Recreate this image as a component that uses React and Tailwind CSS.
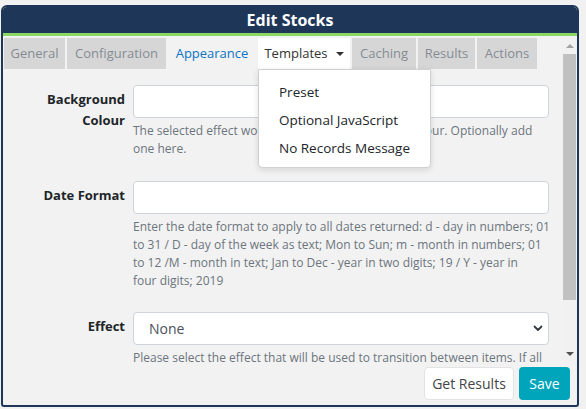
import React from "react";

const font = { fontFamily: '"Open Sans", "Noto Sans", Arial, sans-serif' };

function Tab({ w, children, variant }) {
  const base = "h-[31px] flex items-center justify-center text-[13px] shrink-0 " + w;
  if (variant === "link")
    return <div className={base + " text-[#0b72c4]"}>{children}</div>;
  if (variant === "open")
    return <div className={base + " bg-white text-[#333]"}>{children}</div>;
  return <div className={base + " bg-[#d6d6d6] text-[#858c93]"}>{children}</div>;
}

function Label({ children }) {
  return (
    <div className="w-[122px] shrink-0 text-right font-bold text-[13px] leading-[21px] pt-[4px] text-[#212529]">
      {children}
    </div>
  );
}

function Help({ lines }) {
  return (
    <div className="mt-[4px] text-[12px] leading-[18px] text-[#6c757d] whitespace-nowrap">
      {lines.map((l, i) => (
        <div key={i}>{l}</div>
      ))}
    </div>
  );
}

export default function App() {
  return (
    <div className="w-[586px] h-[409px] bg-[#f1f1f1] pt-[5px] pl-px overflow-hidden" style={font}>
      <div className="w-[578px] h-[402px] border-2 border-[#1e3658] rounded-t-[6px] rounded-b-[3px] flex flex-col bg-[#f2f2f2] overflow-hidden">
        <div className="h-[26px] bg-[#1e3658] flex items-center justify-center text-white font-bold text-[16px] shrink-0">
          Edit Stocks
        </div>
        <div className="h-[3px] bg-[#8bd763] shrink-0" />
        <div className="pt-[2px] flex h-[327px] shrink-0">
          <div className="flex-1 relative">
            <div className="flex gap-[2px] pl-px">
              <Tab w="w-[61px]">General</Tab>
              <Tab w="w-[99px]">Configuration</Tab>
              <Tab w="w-[88px]" variant="link">Appearance</Tab>
              <div className="relative">
                <Tab w="w-[92px]" variant="open">
                  <span>Templates</span>
                  <span className="ml-[8px] w-0 h-0 border-l-[4px] border-r-[4px] border-t-[4px] border-l-transparent border-r-transparent border-t-[#333]" />
                </Tab>
                <div className="absolute left-0 top-[31px] w-[173px] h-[99px] bg-white border border-[#d0d0d0] rounded-b-[4px] shadow-[0_2px_6px_rgba(0,0,0,0.12)] z-10 pt-[8px] text-[13.5px] text-[#212529]">
                  <div className="h-[28px] leading-[28px] pl-[20px]">Preset</div>
                  <div className="h-[28px] leading-[28px] pl-[20px]">Optional JavaScript</div>
                  <div className="h-[28px] leading-[28px] pl-[20px]">No Records Message</div>
                </div>
              </div>
              <Tab w="w-[64px]">Caching</Tab>
              <Tab w="w-[57px]">Results</Tab>
              <Tab w="w-[60px]">Actions</Tab>
            </div>

            <div className="flex gap-[8px] mt-[16px]">
              <Label>
                Background
                <br />
                Colour
              </Label>
              <div className="w-[416px]">
                <div className="h-[33px] bg-white border border-[#ced4da] rounded-[4px]" />
                <Help
                  lines={[
                    "The selected effect would suit a light background colour. Optionally add",
                    "one here.",
                  ]}
                />
              </div>
            </div>

            <div className="flex gap-[8px] mt-[23px]">
              <Label>Date Format</Label>
              <div className="w-[416px]">
                <div className="h-[33px] bg-white border border-[#ced4da] rounded-[4px]" />
                <Help
                  lines={[
                    "Enter the date format to apply to all dates returned: d - day in numbers; 01",
                    "to 31 / D - day of the week as text; Mon to Sun; m - month in numbers; 01",
                    "to 12 /M - month in text; Jan to Dec - year in two digits; 19 / Y - year in",
                    "four digits; 2019",
                  ]}
                />
              </div>
            </div>

            <div className="flex gap-[8px] mt-[22px]">
              <Label>Effect</Label>
              <div className="w-[416px]">
                <div className="h-[33px] bg-white border border-[#ced4da] rounded-[4px] flex items-center justify-between pl-[15px] pr-[5px]">
                  <span className="text-[14px] text-[#495057]">None</span>
                  <svg width="10" height="7" viewBox="0 0 10 7">
                    <path d="M1.5 1.5l3.5 3.5 3.5-3.5" fill="none" stroke="#343a40" strokeWidth="1.8" strokeLinecap="round" strokeLinejoin="round" />
                  </svg>
                </div>
                <Help
                  lines={[
                    "Please select the effect that will be used to transition between items. If all",
                  ]}
                />
              </div>
            </div>
          </div>

          <div className="w-[15px] h-[325px] bg-[#f1f1f1] flex flex-col items-center shrink-0">
            <div className="h-[16px] w-full flex items-center justify-center">
              <div className="w-0 h-0 border-l-[4px] border-r-[4px] border-b-[4px] border-l-transparent border-r-transparent border-b-[#a3a3a3]" />
            </div>
            <div className="w-[13px] h-[246px] bg-[#c1c1c1]" />
            <div className="flex-1" />
            <div className="h-[16px] w-full flex items-center justify-center mb-[1px]">
              <div className="w-0 h-0 border-l-[4px] border-r-[4px] border-t-[4px] border-l-transparent border-r-transparent border-t-[#505050]" />
            </div>
          </div>
        </div>

        <div className="flex-1 flex justify-end items-start pt-[4px] pr-[7px] gap-[5px]">
          <div className="h-[33px] w-[90px] bg-white border border-[#e3e3e3] rounded-[4px] flex items-center justify-center text-[14px] text-[#444]">
            Get Results
          </div>
          <div className="h-[33px] w-[51px] bg-[#00a5bb] rounded-[4px] flex items-center justify-center text-[14px] text-white">
            Save
          </div>
        </div>
      </div>
    </div>
  );
}
